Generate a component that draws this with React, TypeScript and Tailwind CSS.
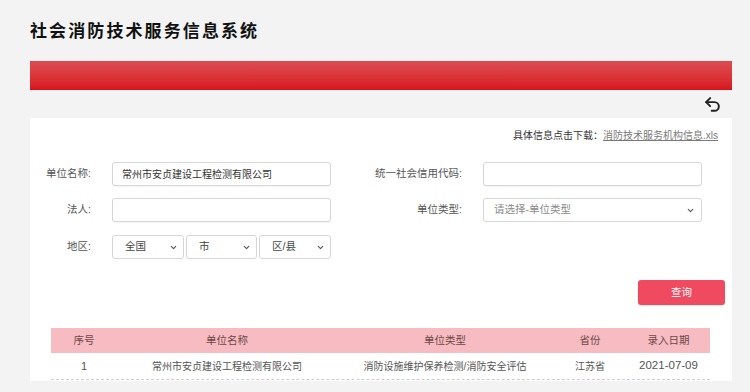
import React from "react";
import { Undo2, ChevronDown } from "lucide-react";

const inputCls =
  "h-[24px] w-[219px] rounded-[3px] border border-[#d6d6d6] bg-white px-[9px] flex items-center text-[10px] text-[#333] shadow-[0_1px_1px_rgba(0,0,0,0.04)]";

function Sel({ w, label, gray, pl = 12, pr = 5 }: { w: string; label: string; gray?: boolean; pl?: number; pr?: number }) {
  return (
    <div
      className={`h-[24px] ${w} rounded-[3px] border border-[#d6d6d6] bg-white flex items-center justify-between text-[10.5px] ${gray ? "text-[#8a8a8a]" : "text-[#444]"}`}
      style={{ paddingLeft: pl, paddingRight: pr }}
    >
      <span>{label}</span>
      <ChevronDown size={9} strokeWidth={3} className="text-[#555]" />
    </div>
  );
}

export default function App() {
  return (
    <div className="w-[750px] h-[392px] overflow-hidden bg-[#f3f3f3] pl-[30px] pr-[18px] font-['Liberation_Sans','Noto_Sans_CJK_SC',sans-serif]">
      <div className="h-[61px] pt-[20px]">
        <h1 className="text-[17px] leading-[20px] font-bold tracking-[2.1px] text-[#111] font-['Noto_Sans_CJK_SC',sans-serif]">
          社会消防技术服务信息系统
        </h1>
      </div>
      <div className="h-[29px] bg-gradient-to-b from-[#da4c52] to-[#d8121c]" />
      <div className="h-[28px] flex items-center justify-end pr-[10px]">
        <Undo2 size={19} strokeWidth={2.5} className="text-[#222]" />
      </div>
      <div className="bg-white h-[263px] pt-[11px]">
        <div className="text-right pr-[14px] text-[10px] leading-[14px] text-[#333]">
          具体信息点击下载：
          <span className="text-[#7a7a7a] underline">消防技术服务机构信息.xls</span>
        </div>

        <div className="mt-[19px] flex flex-col gap-[12px] text-[10.5px] text-[#555]">
          <div className="flex items-center">
            <div className="w-[61px] text-right">单位名称:</div>
            <div className={`${inputCls} ml-[21px]`}>常州市安贞建设工程检测有限公司</div>
            <div className="w-[131px] text-right">统一社会信用代码:</div>
            <div className={`${inputCls} ml-[21px]`} />
          </div>
          <div className="flex items-center">
            <div className="w-[61px] text-right">法人:</div>
            <div className={`${inputCls} ml-[21px]`} />
            <div className="w-[131px] text-right">单位类型:</div>
            <div className="ml-[21px]">
              <Sel w="w-[219px]" label="请选择-单位类型" gray pl={10} pr={6} />
            </div>
          </div>
          <div className="flex items-center mt-[1px]">
            <div className="w-[61px] text-right">地区:</div>
            <div className="ml-[21px] flex gap-[2px]">
              <Sel w="w-[72px]" label="全国" />
              <Sel w="w-[71px]" label="市" />
              <Sel w="w-[72px]" label="区/县" />
            </div>
          </div>
        </div>

        <div className="mt-[21px] flex justify-end pr-[7px]">
          <button className="w-[87px] h-[25px] rounded-[3px] bg-[#ef4a5f] text-white text-[10.5px] flex items-center justify-center shadow-[0_1px_2px_rgba(0,0,0,0.1)]">
            查询
          </button>
        </div>

        <div className="mt-[23px] ml-[21px] w-[659px] text-[10px]">
          <div className="h-[25px] bg-[#f6bcc1] flex items-center text-[#6e4646] text-center text-[10.5px]">
            <div className="w-[66px]">序号</div>
            <div className="w-[220px]">单位名称</div>
            <div className="w-[216px]">单位类型</div>
            <div className="w-[74px]">省份</div>
            <div className="w-[83px]">录入日期</div>
          </div>
          <div className="h-[27px] flex items-center text-[#555] text-center border-b border-dashed border-[#d0d0d0]">
            <div className="w-[66px] text-[11px]">1</div>
            <div className="w-[220px]">常州市安贞建设工程检测有限公司</div>
            <div className="w-[216px]">消防设施维护保养检测/消防安全评估</div>
            <div className="w-[74px]">江苏省</div>
            <div className="w-[83px] text-[11.5px]">2021-07-09</div>
          </div>
        </div>
      </div>
    </div>
  );
}
